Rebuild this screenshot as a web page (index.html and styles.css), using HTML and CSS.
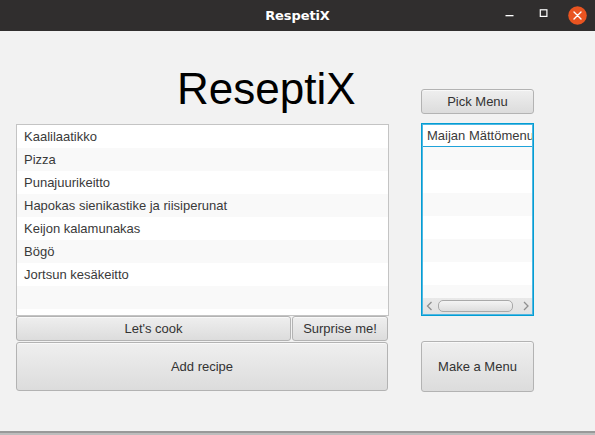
FILE: index.html
```html
<!DOCTYPE html>
<html lang="fi">
<head>
<meta charset="utf-8">
<title>RespetiX</title>
<link rel="stylesheet" href="styles.css">
</head>
<body>
<div class="window">
  <header class="titlebar">
    <div class="tb-spacer"></div>
    <div class="tb-title">RespetiX</div>
    <div class="tb-controls">
      <span class="tb-btn">
        <svg width="19" height="19" viewBox="0 0 19 19"><rect x="5.5" y="9" width="8" height="1.3" fill="#ffffff"/></svg>
      </span>
      <span class="tb-btn">
        <svg width="19" height="19" viewBox="0 0 19 19"><rect x="6.3" y="3.8" width="6.6" height="6.6" fill="none" stroke="#ffffff" stroke-width="1.2"/></svg>
      </span>
      <span class="tb-btn tb-close">
        <svg width="19" height="19" viewBox="0 0 19 19"><circle cx="9.5" cy="9.5" r="9.3" fill="#e95420"/><path d="M6 6 L13 13 M13 6 L6 13" stroke="#ffffff" stroke-width="1.4" stroke-linecap="round"/></svg>
      </span>
    </div>
  </header>
  <main class="content">
    <section class="left">
      <h1 class="app-title">ReseptiX</h1>
      <ul class="list recipes">
        <li>Kaalilaatikko</li>
        <li>Pizza</li>
        <li>Punajuurikeitto</li>
        <li>Hapokas sienikastike ja riisiperunat</li>
        <li>Keijon kalamunakas</li>
        <li>Bögö</li>
        <li>Jortsun kesäkeitto</li>
        <li></li>
        <li></li>
      </ul>
      <div class="btn-row">
        <button class="btn btn-cook">Let's cook</button>
        <button class="btn btn-surprise">Surprise me!</button>
      </div>
      <button class="btn btn-add">Add recipe</button>
    </section>
    <section class="right">
      <button class="btn btn-pick">Pick Menu</button>
      <div class="menu-list">
        <ul class="list menus">
          <li class="focused">Maijan Mättömenu</li>
          <li></li>
          <li></li>
          <li></li>
          <li></li>
          <li></li>
          <li></li>
          <li></li>
        </ul>
        <div class="hscroll">
          <span class="arrow">
            <svg width="16" height="16" viewBox="0 0 16 16"><path d="M8.5 4 L4.5 8 L8.5 12" fill="none" stroke="#8f8f8f" stroke-width="1.3"/></svg>
          </span>
          <div class="track"><div class="thumb"></div></div>
          <span class="arrow">
            <svg width="16" height="16" viewBox="0 0 16 16"><path d="M7 4 L11 8 L7 12" fill="none" stroke="#8f8f8f" stroke-width="1.3"/></svg>
          </span>
        </div>
      </div>
      <button class="btn btn-make">Make a Menu</button>
    </section>
  </main>
</div>
</body>
</html>
```
FILE: styles.css
```css
* { box-sizing: border-box; }
html, body {
  margin: 0;
  padding: 0;
  background: #bdbdbd;
  width: 595px;
  height: 435px;
  overflow: hidden;
}
.window {
  width: 595px;
  font-family: "Liberation Sans", Arial, sans-serif;
}
.titlebar {
  height: 31px;
  background: #302e2e;
  display: grid;
  grid-template-columns: 1fr auto 1fr;
  align-items: center;
}
.tb-title {
  font-family: "DejaVu Sans", sans-serif;
  font-weight: bold;
  font-size: 13px;
  color: #ffffff;
  letter-spacing: -0.1px;
}
.tb-controls {
  display: flex;
  justify-content: flex-end;
  align-items: center;
  gap: 15px;
  padding-right: 8px;
}
.tb-btn {
  width: 19px;
  height: 19px;
  display: block;
}
.tb-btn svg { display: block; }
.content {
  height: 402px;
  background: #f2f2f2;
  border-bottom: 2px solid #999999;
  display: flex;
  padding-left: 16px;
  gap: 32px;
}
.left {
  width: 373px;
  display: flex;
  flex-direction: column;
}
.app-title {
  margin: 0;
  height: 93px;
  padding-top: 36px;
  padding-left: 161px;
  font-family: "Liberation Sans", Arial, sans-serif;
  font-weight: normal;
  font-size: 44px;
  line-height: 44px;
  color: #000000;
}
.list {
  list-style: none;
  margin: 0;
  padding: 0;
  background: #ffffff;
  overflow: hidden;
}
.list li {
  height: 23px;
  line-height: 23px;
  font-size: 13px;
  color: #3a3a3a;
  white-space: nowrap;
  overflow: hidden;
}
.list li:nth-child(even) { background: #f9f9f9; }
.recipes {
  height: 192px;
  border: 1px solid #c4c4c4;
}
.recipes li { padding-left: 7px; }
.btn {
  font-family: "Liberation Sans", Arial, sans-serif;
  font-size: 13px;
  color: #333333;
  background: linear-gradient(#efefef, #dcdcdc);
  border: 1px solid #b3b3b3;
  border-radius: 3px;
  padding: 0;
  margin: 0;
  box-shadow: inset 0 1px 0 rgba(255,255,255,0.6);
}
.btn-row {
  display: flex;
  gap: 1px;
  height: 25px;
}
.btn-cook { width: 275px; height: 25px; }
.btn-surprise { width: 96px; height: 25px; }
.btn-add {
  margin-top: 1px;
  width: 372px;
  height: 49px;
}
.right {
  width: 113px;
  display: flex;
  flex-direction: column;
}
.btn-pick {
  margin-top: 58px;
  height: 25px;
  width: 113px;
}
.menu-list {
  margin-top: 9px;
  height: 193px;
  border: 1px solid #039ed3;
  padding: 1px;
  background: #4fb6e2;
  display: flex;
  flex-direction: column;
}
.menus {
  flex: 1;
}
.menus li { padding-left: 4px; }
.menus li.focused {
  background: #ffffff;
  height: 22px;
  line-height: 21px;
  border-bottom: 1px solid #1fa3da;
}
.hscroll {
  height: 16px;
  display: flex;
  align-items: center;
  background: linear-gradient(#e9e9e9, #e2e2e2);
}
.arrow {
  width: 15px;
  height: 16px;
  display: block;
}
.arrow svg { display: block; }
.track {
  flex: 1;
  height: 16px;
  display: flex;
  align-items: center;
}
.thumb {
  width: 75px;
  height: 12px;
  border: 1px solid #a9a9a9;
  border-radius: 5px;
  background: linear-gradient(#f4f4f4, #dedede);
}
.btn-make {
  margin-top: 25px;
  height: 51px;
  width: 113px;
}
```
